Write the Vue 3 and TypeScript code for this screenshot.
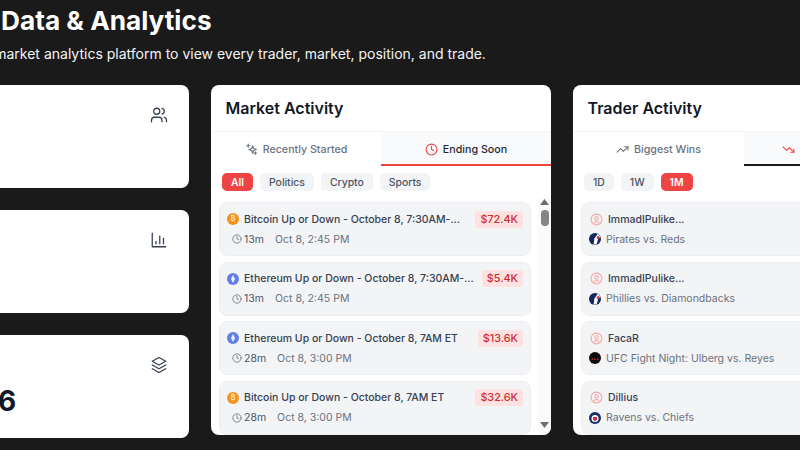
<template>
  <div class="page">
    <header class="hero">
      <h1>Polymarket Data &amp; Analytics</h1>
      <p>A complete prediction market analytics platform to view every trader, market, position, and trade.</p>
    </header>

    <div class="dash">
      <div class="stats">
        <section v-for="stat in stats" :key="stat.key" class="stat-card">
          <div class="stat-value">{{ stat.value }}</div>
          <svg class="stat-icon" viewBox="0 0 24 24">
            <template v-if="stat.key === 'users'">
              <path d="M16 21v-2a4 4 0 0 0-4-4H6a4 4 0 0 0-4 4v2" />
              <circle cx="9" cy="7" r="4" />
              <path d="M22 21v-2a4 4 0 0 0-3-3.87" />
              <path d="M16 3.13a4 4 0 0 1 0 7.75" />
            </template>
            <template v-else-if="stat.key === 'chart'">
              <path d="M3 3v18h18" />
              <path d="M8 17v-3" />
              <path d="M13 17V7" />
              <path d="M18 17v-7" />
            </template>
            <template v-else>
              <path d="M12 2 3 7l9 5 9-5-9-5Z" />
              <path d="m3 12 9 5 9-5" />
              <path d="m3 17 9 5 9-5" />
            </template>
          </svg>
        </section>
      </div>

      <section class="panel">
        <h2>Market Activity</h2>
        <div class="tabs">
          <button class="tab" type="button">
            <svg class="tab-icon" viewBox="0 0 24 24">
              <path d="M6 2v6M3 5h6" />
              <path d="M19 16v5M16.5 18.5h5" />
              <path d="M14 5l1.8 5.2L21 12l-5.2 1.8L14 19l-1.8-5.2L7 12l5.2-1.8L14 5Z" />
            </svg>
            Recently Started
          </button>
          <button class="tab active red" type="button">
            <svg class="tab-icon" viewBox="0 0 24 24">
              <circle cx="12" cy="12" r="10" />
              <path d="M12 6v6l4 2" />
            </svg>
            Ending Soon
          </button>
        </div>
        <div class="chips">
          <span v-for="chip in marketChips" :key="chip" :class="['chip', { on: chip === 'All' }]">{{ chip }}</span>
        </div>
        <div class="list-wrap">
          <div class="list">
            <div v-for="row in markets" :key="row.title + row.amount" class="row">
              <div class="row-top">
                <span :class="['coin', row.coin]">
                  <template v-if="row.coin === 'btc'">₿</template>
                  <svg v-else viewBox="0 0 24 24"><path d="M12 4l4 8.200-4 7.800-4-7.800L12 4Z" /></svg>
                </span>
                <span class="row-title">{{ row.title }}</span>
                <span class="amount">{{ row.amount }}</span>
              </div>
              <div class="row-meta">
                <svg class="meta-icon" viewBox="0 0 24 24">
                  <circle cx="12" cy="12" r="10" />
                  <path d="M12 6v6l4 2" />
                </svg>
                <span class="left">{{ row.left }}</span>
                <span class="when">{{ row.when }}</span>
              </div>
            </div>
          </div>
          <div class="rail">
            <svg class="arrow" viewBox="0 0 9 6"><path d="M4.5 0 9 6H0Z" /></svg>
            <span class="thumb"></span>
            <svg class="arrow down" viewBox="0 0 9 6"><path d="M0 0h9L4.500 6Z" /></svg>
          </div>
        </div>
      </section>

      <section class="panel">
        <h2>Trader Activity</h2>
        <div class="tabs">
          <button class="tab" type="button">
            <svg class="tab-icon" viewBox="0 0 24 24">
              <path d="M22 7l-8.500 8.500-5-5L2 17" />
              <path d="M16 7h6v6" />
            </svg>
            Biggest Wins
          </button>
          <button class="tab active dark" type="button">
            <svg class="tab-icon" viewBox="0 0 24 24">
              <path d="M22 17l-8.500-8.500-5 5L2 7" />
              <path d="M16 17h6v-6" />
            </svg>
            Biggest Losses
          </button>
        </div>
        <div class="chips">
          <span v-for="chip in traderChips" :key="chip" :class="['chip', { on: chip === '1M' }]">{{ chip }}</span>
        </div>
        <div class="list-wrap">
          <div class="list">
            <div v-for="row in traders" :key="row.game" class="row">
              <div class="row-top">
                <svg class="avatar" viewBox="0 0 24 24">
                  <circle cx="12" cy="12" r="10" />
                  <circle cx="12" cy="10" r="3.200" />
                  <path d="M7 19a5.500 5.500 0 0 1 10 0" />
                </svg>
                <span class="row-title name">{{ row.name }}</span>
              </div>
              <div class="row-game">
                <svg class="league" viewBox="0 0 24 24">
                  <template v-if="row.league === 'mlb'">
                    <circle cx="12" cy="12" r="12" fill="#12285f" />
                    <path d="M9 23c1-6 2-9 1-11 3-3 5-7 7-10 3 1 5 4 6 7l-5 3-1 5-2 6Z" fill="#ffffff" />
                    <circle cx="18.500" cy="9" r="3" fill="#d22f3c" />
                  </template>
                  <template v-else-if="row.league === 'ufc'">
                    <circle cx="12" cy="12" r="12" fill="#0d0d0d" />
                    <path d="M5 13h3v3H5ZM10.500 13h3v3h-3ZM16 13h3v3h-3Z" fill="#b3262e" />
                  </template>
                  <template v-else>
                    <circle cx="12" cy="12" r="12" fill="#14306b" />
                    <circle cx="12" cy="13" r="7" fill="#ffffff" />
                    <path d="M8 10h8v5l-4 4-4-4Z" fill="#d22f3c" />
                  </template>
                </svg>
                <span>{{ row.game }}</span>
              </div>
            </div>
          </div>
        </div>
      </section>
    </div>
  </div>
</template>

<script setup lang="ts">
type Market = {
  coin: 'btc' | 'eth';
  title: string;
  amount: string;
  left: string;
  when: string;
};

const stats = [
  { key: 'users', value: '' },
  { key: 'chart', value: '' },
  { key: 'layers', value: '6' }
];

const marketChips = ['All', 'Politics', 'Crypto', 'Sports'];
const traderChips = ['1D', '1W', '1M'];

const markets: Market[] = [
  { coin: 'btc', title: 'Bitcoin Up or Down - October 8, 7:30AM-...', amount: '$72.4K', left: '13m', when: 'Oct 8, 2:45 PM' },
  { coin: 'eth', title: 'Ethereum Up or Down - October 8, 7:30AM-...', amount: '$5.4K', left: '13m', when: 'Oct 8, 2:45 PM' },
  { coin: 'eth', title: 'Ethereum Up or Down - October 8, 7AM ET', amount: '$13.6K', left: '28m', when: 'Oct 8, 3:00 PM' },
  { coin: 'btc', title: 'Bitcoin Up or Down - October 8, 7AM ET', amount: '$32.6K', left: '28m', when: 'Oct 8, 3:00 PM' }
];

const traders = [
  { name: 'ImmadIPulike...', game: 'Pirates vs. Reds', league: 'mlb' },
  { name: 'ImmadIPulike...', game: 'Phillies vs. Diamondbacks', league: 'mlb' },
  { name: 'FacaR', game: 'UFC Fight Night: Ulberg vs. Reyes', league: 'ufc' },
  { name: 'Dillius', game: 'Ravens vs. Chiefs', league: 'nfl' }
];
</script>

<style>
html,
body {
  margin: 0;
  height: 100%;
  overflow: hidden;
  background: #1a1a1a;
}
</style>

<style scoped>
.page {
  width: 1120px;
  height: 450px;
  margin-left: -151px;
  overflow: hidden;
  background: #1a1a1a;
  font-family: Inter, "Liberation Sans", sans-serif;
}

.hero {
  height: 85px;
  box-sizing: border-box;
  padding-top: 5px;
  color: #ffffff;
}

.hero h1 {
  margin: 0;
  font-size: 26.200px;
  line-height: 32px;
  font-weight: 700;
}

.hero p {
  margin: 7px 0 0 -4px;
  font-size: 14px;
  line-height: 20px;
  color: #f3f4f6;
}

.dash {
  display: grid;
  grid-template-columns: 340px 340px 342px;
  gap: 22px;
  align-items: start;
}

.stats {
  display: flex;
  flex-direction: column;
  gap: 22px;
}

.stat-card {
  flex: none;
  height: 103px;
  box-sizing: border-box;
  display: flex;
  justify-content: space-between;
  padding: 21px 21px 0 149px;
  background: #ffffff;
  border-radius: 8px;
}

.stat-value {
  margin-top: 28px;
  font-size: 28px;
  line-height: 34px;
  font-weight: 700;
  color: #111827;
}

.stat-icon {
  width: 18px;
  height: 18px;
  fill: none;
  stroke: #374151;
  stroke-width: 1.700;
  stroke-linecap: round;
  stroke-linejoin: round;
}

.panel {
  height: 350px;
  display: flex;
  flex-direction: column;
  background: #ffffff;
  border-radius: 8px;
  overflow: hidden;
}

.panel h2 {
  margin: 0;
  padding: 0 14.500px;
  height: 47px;
  box-sizing: border-box;
  line-height: 46px;
  font-size: 16px;
  font-weight: 600;
  color: #111827;
  border-bottom: 1px solid #f3f4f6;
}

.tabs {
  display: grid;
  grid-template-columns: 1fr 1fr;
  height: 34px;
  flex: none;
  box-sizing: border-box;
  border-bottom: 1px solid #f3f4f6;
}

.tab {
  display: flex;
  align-items: center;
  justify-content: center;
  gap: 5px;
  padding: 3px 0 0;
  height: 34px;
  border: none;
  border-bottom: 2px solid transparent;
  background: #ffffff;
  font-family: inherit;
  font-size: 10.700px;
  font-weight: 500;
  color: #6b7280;
}

.tab.active {
  background: #f9fafb;
  color: #1f2937;
}

.tab.red {
  border-bottom-color: #ef4444;
}

.tab.dark {
  border-bottom-color: #1a1a1a;
}

.tab-icon {
  width: 13px;
  height: 13px;
  fill: none;
  stroke: #6b7280;
  stroke-width: 2;
  stroke-linecap: round;
  stroke-linejoin: round;
}

.tab.active .tab-icon {
  stroke: #ef4444;
}

.chips {
  flex: none;
  display: flex;
  gap: 7px;
  padding: 7px 11px;
}

.chip {
  padding: 1px 9px 0;
  height: 17px;
  line-height: 17px;
  border-radius: 5px;
  background: #f3f4f6;
  color: #4b5563;
  font-size: 10.400px;
  font-weight: 500;
}

.chip.on {
  background: #ef4444;
  color: #ffffff;
  font-weight: 600;
}

.list-wrap {
  flex: 1;
  min-height: 0;
  display: flex;
}

.list {
  flex: 1;
  min-width: 0;
  display: flex;
  flex-direction: column;
  gap: 5.600px;
  padding: 4px 7px 0 8px;
  overflow: hidden;
}

.rail {
  flex: none;
  width: 13px;
  box-sizing: border-box;
  display: flex;
  flex-direction: column;
  align-items: center;
  padding: 1px 0 7px;
  background: #fafafa;
}

.arrow {
  width: 9px;
  height: 6px;
  fill: #6e6e6e;
}

.arrow.down {
  margin-top: auto;
}

.thumb {
  width: 8px;
  height: 16px;
  margin-top: 5px;
  border-radius: 4px;
  background: #858585;
}

.row {
  flex-shrink: 0;
  height: 54px;
  box-sizing: border-box;
  padding: 7px 7px;
  background: #f3f4f6;
  border: 1px solid #eceef1;
  border-radius: 8px;
}

.row-top {
  display: flex;
  align-items: center;
  gap: 5px;
  height: 18px;
}

.coin {
  flex-shrink: 0;
  width: 12px;
  height: 12px;
  border-radius: 50%;
  color: rgba(255, 255, 255, 0.85);
  font-size: 7px;
  font-weight: 600;
  line-height: 12px;
  text-align: center;
}

.coin svg {
  display: block;
  width: 12px;
  height: 12px;
  fill: rgba(255, 255, 255, 0.9);
}

.coin.btc {
  background: #f7931a;
}

.coin.eth {
  background: #627eea;
}

.row-title {
  flex: 1;
  min-width: 0;
  white-space: nowrap;
  font-size: 10.500px;
  font-weight: 500;
  color: #374151;
}

.amount {
  flex-shrink: 0;
  padding: 0 5px;
  height: 17px;
  line-height: 17px;
  border-radius: 3px;
  background: #fee2e2;
  color: #d12c2c;
  font-size: 10.800px;
  font-weight: 500;
}

.row-meta {
  display: flex;
  align-items: center;
  margin: 2px 0 0 5px;
  height: 18px;
  font-size: 10.500px;
  color: #4b5563;
}

.meta-icon {
  width: 10px;
  height: 10px;
  margin-right: 2px;
  fill: none;
  stroke: #6b7280;
  stroke-width: 2;
  stroke-linecap: round;
  stroke-linejoin: round;
}

.when {
  margin-left: 11px;
  color: #6b7280;
}

.avatar {
  flex-shrink: 0;
  width: 13px;
  height: 13px;
  margin-left: 1px;
  fill: none;
  stroke: #f8a5a5;
  stroke-width: 2;
}

.row-game {
  display: flex;
  align-items: center;
  gap: 5px;
  margin-top: 2px;
  height: 18px;
  font-size: 10.500px;
  color: #6b7280;
}

.league {
  flex-shrink: 0;
  width: 12px;
  height: 12px;
}
</style>
